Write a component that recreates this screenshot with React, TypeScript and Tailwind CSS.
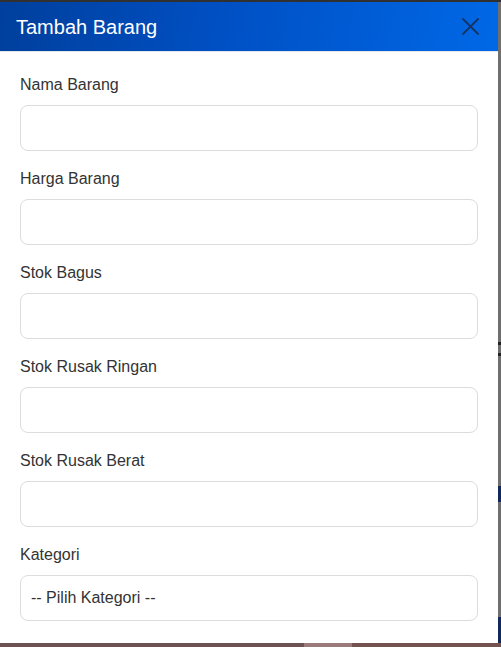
const fields = ["Nama Barang", "Harga Barang", "Stok Bagus", "Stok Rusak Ringan", "Stok Rusak Berat"];

const App = () => {
  return (
    <div className="flex h-[647px] w-[501px] flex-col overflow-hidden bg-[#6f6f6f] font-['Liberation_Sans',Arial,sans-serif]">
      <div className="h-[2px] bg-[#303030]" />
      <div className="flex flex-1">
        <div className="flex w-[498px] flex-col bg-white">
          <div className="flex h-[50px] items-center justify-between border-b border-[#e3e6ea] bg-[linear-gradient(100deg,#003f9c_0%,#0050c4_45%,#0068e6_100%)] pl-4 pr-[19px]">
            <h2 className="text-[20px] leading-6 text-white">Tambah Barang</h2>
            <button className="flex size-[18px] items-center justify-center text-[#17315e]" type="button">
              <svg viewBox="0 0 16 16" className="size-[17px]" fill="none" stroke="currentColor" strokeWidth="1.7" strokeLinecap="square">
                <path d="M1 1L15 15M15 1L1 15" />
              </svg>
            </button>
          </div>
          <form className="flex flex-col gap-[16px] px-5 pt-[21px]">
            {fields.map((label) => (
              <div key={label} className="flex flex-col gap-[8px]">
                <label className="text-[16px] leading-6 text-[#333]">{label}</label>
                <input className="h-[46px] rounded-lg border border-[#dcdcdc] bg-white px-3 outline-none" type="text" />
              </div>
            ))}
            <div className="flex flex-col gap-[8px]">
              <label className="text-[16px] leading-6 text-[#333]">Kategori</label>
              <div className="flex h-[46px] items-center rounded-lg border border-[#dcdcdc] bg-white px-[10px] text-[16px] text-[#333]">
                -- Pilih Kategori --
              </div>
            </div>
          </form>
        </div>
        <div className="flex flex-1 flex-col bg-[#6f6f6f]">
          <div className="h-[340px]" />
          <div className="h-[3px] bg-[#222]" />
          <div className="h-[8px]" />
          <div className="h-[3px] bg-[#222]" />
          <div className="h-[130px]" />
          <div className="h-[16px] bg-[#0f2a5a]" />
          <div className="h-[115px]" />
          <div className="flex-1 bg-[#0f2a5a]" />
        </div>
      </div>
      <div className="flex h-[4px]">
        <div className="w-[304px] bg-[#6d5254]" />
        <div className="w-[48px] bg-[#9a7a7a]" />
        <div className="flex-1 bg-[#74524f]" />
      </div>
    </div>
  );
};

export default App;
